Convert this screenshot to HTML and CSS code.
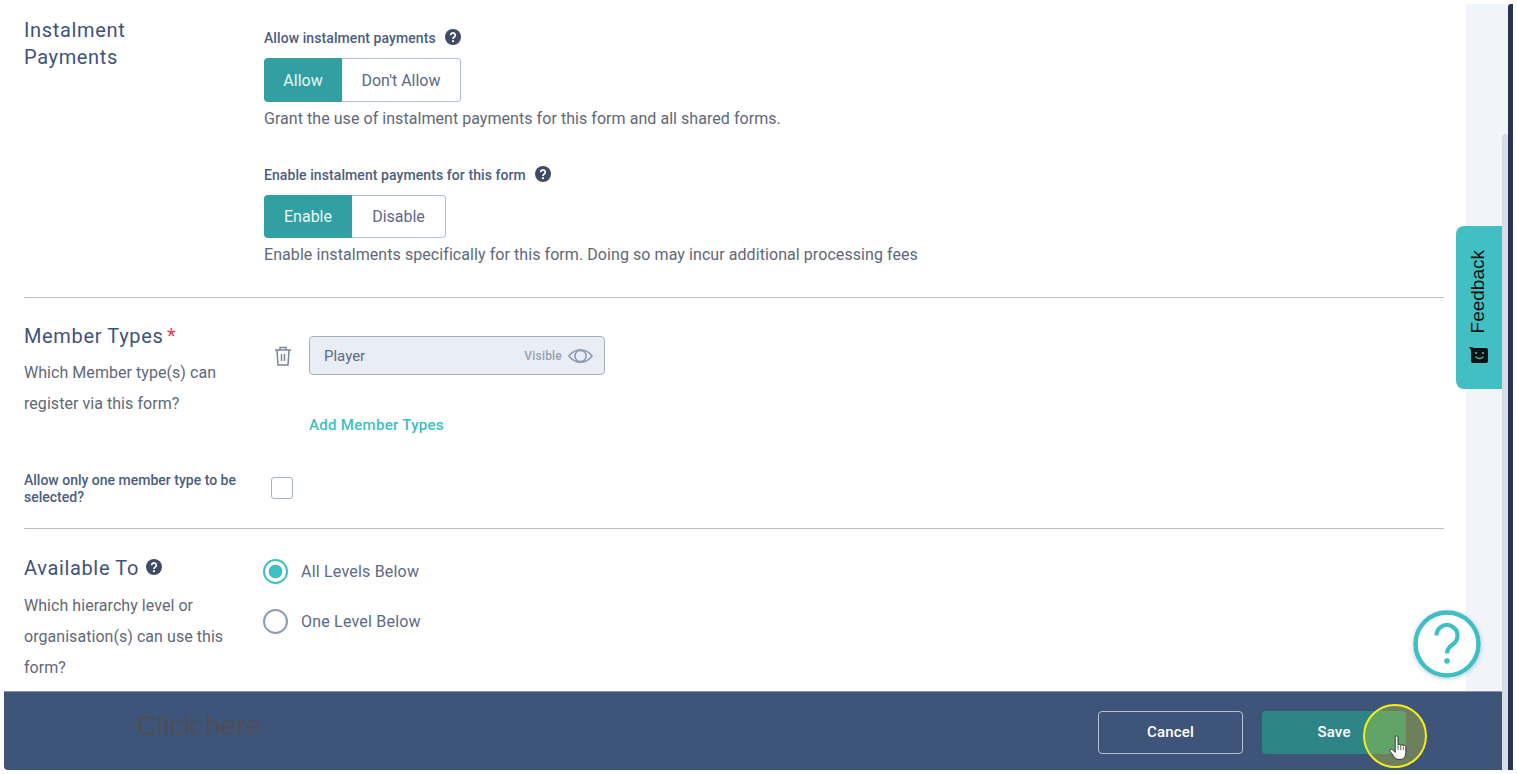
FILE: index.html
```html
<!DOCTYPE html>
<html lang="en">

<head>
    <meta charset="UTF-8">
    <meta name="viewport" content="width=device-width, initial-scale=1.0">
    <title>Registration form settings</title>
    <link rel="stylesheet" href="styles.css">
</head>

<body>
    <div class="frame">
        <div class="panel">
            <div class="workspace">
                <main class="form">
                    <section class="row row-instalments">
                        <div class="side">
                            <h2 class="heading">Instalment<br>Payments</h2>
                        </div>
                        <div class="fields">
                            <div class="field-label">
                                Allow instalment payments
                                <svg class="help-icon" viewBox="0 0 16 16">
                                    <circle cx="8" cy="8" r="8" fill="#3f4b63" />
                                    <path d="M5.7 6.2a2.3 2.2 0 1 1 3.6 1.8c-.9.6-1.3 1-1.3 1.9" fill="none" stroke="#fff" stroke-width="1.7" />
                                    <circle cx="8" cy="12.2" r="1.1" fill="#fff" />
                                </svg>
                            </div>
                            <div class="toggle">
                                <span class="toggle-item toggle-on toggle-allow">Allow</span>
                                <span class="toggle-item toggle-off toggle-dont">Don't Allow</span>
                            </div>
                            <p class="hint hint-first">Grant the use of instalment payments for this form and all shared forms.</p>

                            <div class="field-label field-label-second">
                                Enable instalment payments for this form
                                <svg class="help-icon" viewBox="0 0 16 16">
                                    <circle cx="8" cy="8" r="8" fill="#3f4b63" />
                                    <path d="M5.7 6.2a2.3 2.2 0 1 1 3.6 1.8c-.9.6-1.3 1-1.3 1.9" fill="none" stroke="#fff" stroke-width="1.7" />
                                    <circle cx="8" cy="12.2" r="1.1" fill="#fff" />
                                </svg>
                            </div>
                            <div class="toggle toggle-short">
                                <span class="toggle-item toggle-on toggle-enable">Enable</span>
                                <span class="toggle-item toggle-off toggle-disable">Disable</span>
                            </div>
                            <p class="hint hint-second">Enable instalments specifically for this form. Doing so may incur additional processing fees</p>
                        </div>
                    </section>

                    <hr class="divider">

                    <section class="row row-members">
                        <div class="side">
                            <h2 class="heading">Member Types <span class="required">*</span></h2>
                            <p class="side-text">Which Member type(s) can register via this form?</p>
                        </div>
                        <div class="fields">
                            <div class="member-line">
                                <svg class="trash-icon" viewBox="0 0 20 22" fill="none" stroke="#7b8798" stroke-width="1.5">
                                    <path d="M2 5h16M7 5V2.500h6V5M4 5l1 15h10l1-15M8.500 9v7M11.500 9v7" />
                                </svg>
                                <div class="member-box">
                                    <span class="member-name">Player</span>
                                    <span class="member-visible">Visible</span>
                                    <svg class="eye-icon" viewBox="0 0 26 16" fill="none" stroke="#8e99a8" stroke-width="1.6">
                                        <path d="M1 8c3.500-4.600 7.500-6.500 12-6.500S21.500 3.400 25 8c-3.500 4.600-7.500 6.500-12 6.500S4.500 12.600 1 8z" />
                                        <circle cx="13" cy="8" r="5.800" />
                                    </svg>
                                </div>
                            </div>
                            <a class="add-link">Add Member Types</a>
                        </div>
                    </section>

                    <section class="row row-single">
                        <div class="side">
                            <div class="single-label">Allow only one member type to be selected?</div>
                        </div>
                        <div class="fields">
                            <span class="checkbox"></span>
                        </div>
                    </section>

                    <hr class="divider">

                    <section class="row row-available">
                        <div class="side">
                            <h2 class="heading">
                                Available To
                                <svg class="help-icon help-icon-heading" viewBox="0 0 16 16">
                                    <circle cx="8" cy="8" r="8" fill="#3f4b63" />
                                    <path d="M5.7 6.2a2.3 2.2 0 1 1 3.6 1.8c-.9.6-1.3 1-1.3 1.9" fill="none" stroke="#fff" stroke-width="1.7" />
                                    <circle cx="8" cy="12.2" r="1.1" fill="#fff" />
                                </svg>
                            </h2>
                            <p class="side-text side-text-available">Which hierarchy level or organisation(s) can use this form?</p>
                        </div>
                        <div class="fields radios">
                            <label class="radio-line"><span class="radio radio-on"></span>All Levels Below</label>
                            <label class="radio-line"><span class="radio"></span>One Level Below</label>
                        </div>
                    </section>
                </main>
                <div class="gutter"></div>
            </div>

            <footer class="footer">
                <span class="click-here">Click here</span>
                <button class="btn btn-cancel">Cancel</button>
                <button class="btn btn-save">Save</button>
            </footer>
        </div>
        <div class="scrollbar"><div class="scroll-thumb"></div></div>
        <div class="edge"></div>
    </div>

    <div class="feedback">
        <svg class="feedback-icon" viewBox="0 0 19 16">
            <path d="M0 0h3l1.500 1H17a2 2 0 0 1 2 2v11a2 2 0 0 1-2 2H4a2 2 0 0 1-2-2V3z" fill="#111" />
            <circle cx="7" cy="6" r="1.100" fill="#41bfc3" />
            <circle cx="14" cy="6" r="1.100" fill="#41bfc3" />
            <path d="M6.500 9.500c1.500 2.600 6.500 2.600 8 0" fill="none" stroke="#41bfc3" stroke-width="1.500" />
        </svg>
        <span class="feedback-text">Feedback</span>
    </div>

    <div class="help-bubble">
        <svg viewBox="0 0 68 68" fill="none" stroke="#3dbfc4">
            <circle cx="34" cy="34" r="31.500" fill="#fff" stroke-width="4.500" />
            <path d="M23.500 25.500a10.500 10.500 0 1 1 16.500 8.700c-4 2.700-6 4.800-6 9.300" stroke-width="4.200" />
            <circle cx="34" cy="51" r="2.800" fill="#3dbfc4" stroke="none" />
        </svg>
    </div>

    <div class="click-spot"></div>
    <svg class="cursor" viewBox="0 0 18 25">
        <path d="M5.500 2.200c0-1.700 2.600-1.700 2.600 0v7.300c.3-1.300 2.400-1.200 2.500.2.300-1.100 2.300-1 2.400.4.400-.9 2.200-.7 2.300.8v5.500c0 3.300-2 6.300-5.500 6.300-3 0-4.500-1-6-3.300L.9 15.200c-.9-1.400 1-2.800 2.200-1.500l2.400 2.400z" fill="#fff" stroke="#222" stroke-width=".8" />
        <path d="M8.100 10v4M10.600 10v4M13 11v3" stroke="#333" stroke-width=".7" />
    </svg>
</body>

</html>
```
FILE: styles.css
```css
* {
    margin: 0;
    padding: 0;
    box-sizing: border-box;
}

html,
body {
    height: 100%;
    overflow: hidden;
}

body {
    font-family: Roboto, "Noto Sans", Arial, sans-serif;
    background: #fff;
    color: #56627a;
}

.frame {
    display: flex;
    height: 766px;
    margin: 4px;
}

.panel {
    flex: 1;
    min-width: 0;
    display: flex;
    flex-direction: column;
}

.workspace {
    flex: 1;
    min-height: 0;
    display: flex;
    overflow: hidden;
}

.form {
    flex: 1;
    min-width: 0;
    padding: 0 22px 0 20px;
    background: #fff;
}

.gutter {
    width: 36px;
    background: #f1f4f9;
}

.scrollbar {
    width: 6px;
    padding-top: 130px;
    background: #f1f4f9;
}

.scroll-thumb {
    height: 100%;
    background: #d5dce6;
    border-radius: 3px 3px 0 0;
}

.edge {
    width: 5px;
    background: #2a3352;
    border-radius: 3px 0 0 0;
}

/* form rows */
.row {
    display: flex;
}

.side {
    width: 240px;
    flex-shrink: 0;
    padding-right: 14px;
}

.fields {
    flex: 1;
    min-width: 0;
}

.row-instalments {
    padding-top: 13px;
    height: 293px;
}

.heading {
    font-size: 20px;
    line-height: 27px;
    font-weight: 400;
    letter-spacing: 0.65px;
    color: #3f5378;
}

.help-icon {
    width: 16px;
    height: 16px;
    margin-left: 6px;
    vertical-align: -2px;
}

.help-icon-heading {
    margin-left: 1px;
    vertical-align: 0;
}

.field-label {
    font-size: 14px;
    font-weight: 500;
    line-height: 18px;
    letter-spacing: 0.08px;
    margin-top: 12px;
    color: #4c5d7e;
}

.field-label-second {
    margin-top: 37px;
}

.toggle {
    display: inline-flex;
    height: 44px;
    margin-top: 11px;
    vertical-align: top;
}

.toggle-short {
    height: 43px;
}

.toggle-item {
    display: flex;
    align-items: center;
    justify-content: center;
    font-size: 16px;
}

.toggle-on {
    background: #32a0a2;
    color: #e9f6f5;
    border-radius: 4px 0 0 4px;
}

.toggle-off {
    color: #5b6a88;
    border: 1px solid #b4bfcd;
    border-left: 0;
    border-radius: 0 4px 4px 0;
}

.toggle-allow {
    width: 78px;
}

.toggle-dont {
    width: 119px;
}

.toggle-enable {
    width: 88px;
}

.toggle-disable {
    width: 94px;
}

.hint {
    font-size: 16px;
    line-height: 20px;
    letter-spacing: 0.05px;
    margin-top: 6px;
    color: #5f6878;
}

.hint-first {
    margin-top: 7px;
}

.hint-second {
    margin-top: 7px;
    letter-spacing: 0.07px;
}

.divider {
    border: 0;
    height: 1px;
    background: #b6bfcb;
}

.row-members {
    padding-top: 25px;
    height: 162px;
}

.required {
    margin-left: -2px;
    color: #d8415f;
}

.side-text {
    font-size: 16px;
    line-height: 31px;
    letter-spacing: 0.05px;
    margin-top: 7px;
    color: #5f6878;
}

.side-text-available {
    margin-top: 8px;
}

.member-line {
    display: flex;
    align-items: center;
    margin-top: 13px;
}

.trash-icon {
    width: 20px;
    height: 22px;
    margin: 0 16px 0 9px;
}

.member-box {
    width: 296px;
    height: 39px;
    display: flex;
    align-items: center;
    padding: 0 11px 0 14px;
    background: #e9eef6;
    border: 1px solid #a3b0c0;
    border-radius: 4px;
}

.member-name {
    flex: 1;
    font-size: 15px;
    color: #5b6a88;
}

.member-visible {
    font-size: 12px;
    font-weight: 500;
    letter-spacing: 0.2px;
    color: #97a1af;
    margin-right: 6px;
}

.eye-icon {
    width: 25px;
    height: 16px;
}

.add-link {
    display: block;
    margin: 40px 0 0 45px;
    font-size: 15px;
    font-weight: 500;
    line-height: 20px;
    letter-spacing: 0.3px;
    color: #3dbfc4;
}

.row-single {
    height: 68px;
}

.single-label {
    font-size: 14px;
    font-weight: 500;
    line-height: 17px;
    padding-top: 12px;
    color: #4c5d7e;
}

.checkbox {
    display: block;
    width: 22px;
    height: 22px;
    margin: 17px 0 0 7px;
    border: 1px solid #a3b0c0;
    border-radius: 3px;
}

.row-available {
    padding-top: 26px;
}

.radios {
    margin-top: 4px;
    margin-left: -1px;
}

.radio-line {
    display: flex;
    align-items: center;
    gap: 13px;
    height: 25px;
    margin-bottom: 25px;
    font-size: 16px;
    letter-spacing: 0.2px;
    color: #5b6a88;
}

.radio {
    width: 25px;
    height: 25px;
    border: 2.500px solid #8e9bb0;
    border-radius: 50%;
    background: #fff;
}

.radio-on {
    border-color: #3dbfc4;
    background: radial-gradient(circle, #3dbfc4 0 6.500px, #fff 7.200px);
}

/* bottom bar */
.footer {
    height: 79px;
    flex-shrink: 0;
    display: flex;
    align-items: center;
    padding: 0 96px 0 133px;
    background: #3f5479;
    border-top: 1px solid #8593ac;
    border-bottom-left-radius: 4px;
}

.click-here {
    margin-right: auto;
    margin-top: -10px;
    font-family: "Liberation Sans", Arial, sans-serif;
    font-size: 28px;
    color: #4d4f57;
}

.btn {
    height: 43px;
    font-family: inherit;
    font-size: 15px;
    font-weight: 500;
    letter-spacing: 0.2px;
    color: #fff;
    border-radius: 4px;
    margin-top: 2px;
}

.btn-cancel {
    width: 145px;
    background: transparent;
    border: 1px solid #b6c0d0;
}

.btn-save {
    width: 144px;
    background: #2e8585;
    border: 0;
    margin-left: 19px;
}

/* things floating over the page */
.feedback {
    position: absolute;
    left: 1456px;
    top: 226px;
    width: 46px;
    height: 163px;
    display: flex;
    flex-direction: column-reverse;
    align-items: center;
    gap: 14px;
    padding: 0 2px 26px 0;
    background: #41bfc3;
    border-radius: 8px 0 0 8px;
}

.feedback-text {
    writing-mode: vertical-rl;
    transform: rotate(180deg);
    font-family: "Liberation Sans", Arial, sans-serif;
    font-size: 19px;
    color: #111;
}

.feedback-icon {
    width: 19px;
    height: 16px;
}

.help-bubble {
    position: absolute;
    left: 1413px;
    top: 610px;
    width: 68px;
    height: 68px;
    border-radius: 50%;
    box-shadow: 0 1px 4px rgba(40, 60, 90, 0.25);
}

.help-bubble svg {
    display: block;
    width: 100%;
    height: 100%;
}

.click-spot {
    position: absolute;
    left: 1363px;
    top: 704px;
    width: 64px;
    height: 64px;
    background: rgba(255, 255, 16, 0.25);
    border: 2px solid #f4ef17;
    border-radius: 50%;
}

.cursor {
    position: absolute;
    left: 1389px;
    top: 735px;
    width: 20px;
    height: 27px;
}
```
